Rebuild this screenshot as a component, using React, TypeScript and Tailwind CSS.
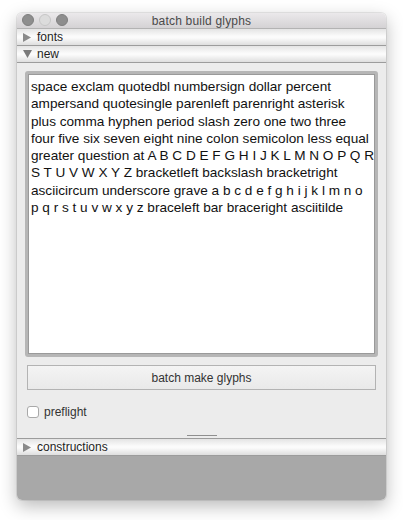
import React from "react";

// glyph list, broken where the reference text box wraps
const glyphLines = [
  "space exclam quotedbl numbersign dollar percent",
  "ampersand quotesingle parenleft parenright asterisk",
  "plus comma hyphen period slash zero one two three",
  "four five six seven eight nine colon semicolon less equal",
  "greater question at A B C D E F G H I J K L M N O P Q R",
  "S T U V W X Y Z bracketleft backslash bracketright",
  "asciicircum underscore grave a b c d e f g h i j k l m n o",
  "p q r s t u v w x y z braceleft bar braceright asciitilde",
];

function Disclosure({ open, label }: { open: boolean; label: string }) {
  return (
    <div className="flex h-[17px] items-center border-b border-[#9c9c9c] bg-[linear-gradient(#e4e4e4,#fbfbfb_45%,#fbfbfb_55%,#dedede)] pl-[3px]">
      <span className="flex w-[14px] justify-center">
        {open ? (
          <svg width="9" height="8" viewBox="0 0 9 8">
            <path d="M0 0 H9 L4.5 8 Z" fill="#7a7a7a" />
          </svg>
        ) : (
          <svg width="8" height="9" viewBox="0 0 8 9">
            <path d="M0 0 V9 L8 4.5 Z" fill="#8a8a8a" />
          </svg>
        )}
      </span>
      <span className="ml-[3px] text-[12px] leading-none text-[#1e1e1e]">{label}</span>
    </div>
  );
}

export default function App() {
  return (
    <div className="h-[520px] w-[403px] bg-white pt-[13px] pl-[17px] font-['Liberation_Sans',Arial,sans-serif]">
      <div className="flex h-[487px] w-[369px] flex-col overflow-hidden rounded-[5px] shadow-[0_6px_18px_rgba(0,0,0,0.28),0_0_0_1px_rgba(0,0,0,0.08)]">
        {/* Title bar */}
        <div className="relative flex h-[16px] items-center justify-center border-b border-[#b3b3b3] bg-[linear-gradient(#ebe9eb,#d4d2d4)]">
          <div className="absolute left-[5px] top-[1px] flex gap-[5px]">
            <span className="h-[12px] w-[12px] rounded-full border border-[#7f7f7f] bg-[#8e8e8e]" />
            <span className="h-[12px] w-[12px] rounded-full border border-[#c6c6c6] bg-[#dcdcdc]" />
            <span className="h-[12px] w-[12px] rounded-full border border-[#7f7f7f] bg-[#8e8e8e]" />
          </div>
          <span className="text-[12px] leading-none tracking-[0.2px] text-[#4a4a4a]">batch build glyphs</span>
        </div>

        <Disclosure open={false} label="fonts" />
        <Disclosure open={true} label="new" />

        {/* Body */}
        <div className="flex flex-col bg-[#ececec] px-[8px] pt-[8px]">
          <div className="h-[286px] rounded-[3px] border-[3px] border-[#b6b6b6] bg-white">
            <div className="h-full overflow-hidden border border-[#9a9a9a] pl-[2px] pt-[3px] text-[13.6px] leading-[17.3px] text-[#111]">
              {glyphLines.map((line) => (
                <div key={line} className="whitespace-nowrap">
                  {line}
                </div>
              ))}
            </div>
          </div>

          <button className="mx-[2px] mt-[8px] h-[25px] border border-[#b3b3b3] bg-[linear-gradient(#f4f4f4,#e9e9e9)] text-[12px] text-[#333]">
            batch make glyphs
          </button>

          <div className="mt-[13px] flex items-center pl-[2px]">
            <span className="h-[12px] w-[12px] rounded-[3px] border border-[#a9a9a9] bg-white" />
            <span className="ml-[5px] text-[12px] text-[#333]">preflight</span>
          </div>

          <div className="mt-[14px] mb-[2px] flex justify-center">
            <span className="h-[1px] w-[30px] bg-[#8f8f8f]" />
          </div>
        </div>

        <div className="border-t border-[#9c9c9c]">
          <Disclosure open={false} label="constructions" />
        </div>

        <div className="flex-1 bg-[#a8a8a8]" />
      </div>
    </div>
  );
}
